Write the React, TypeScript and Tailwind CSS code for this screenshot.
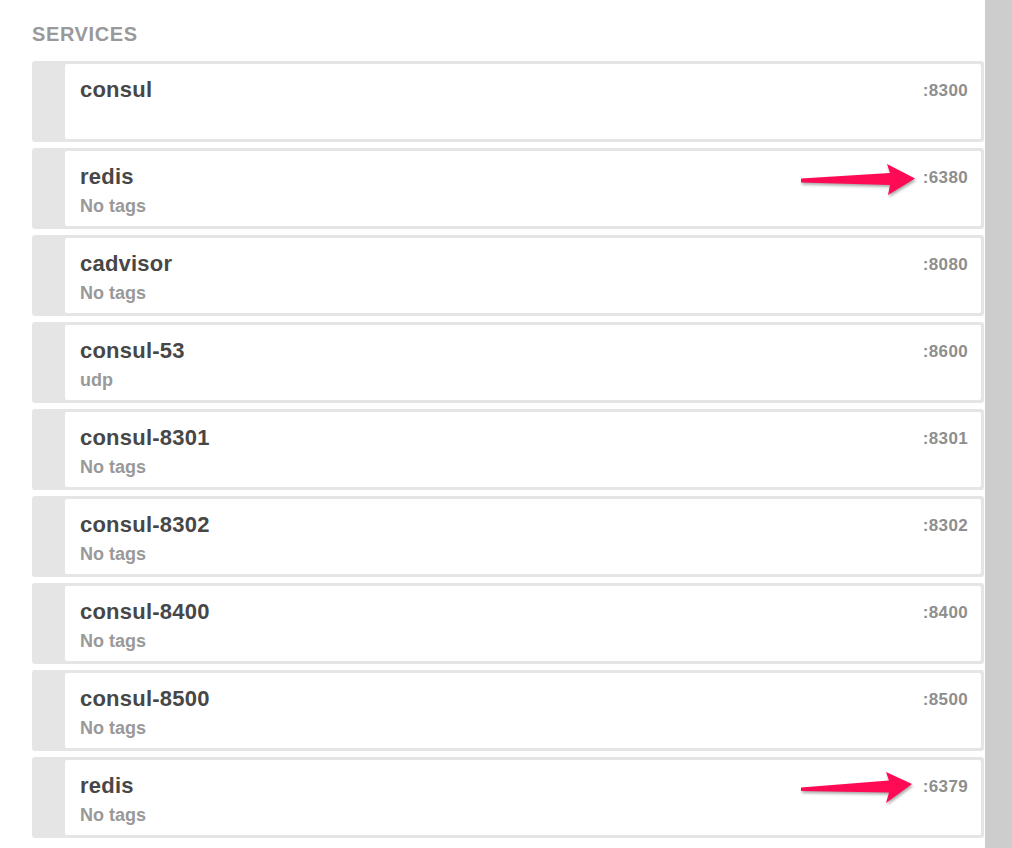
import React from 'react';

type Service = { name: string; tags: string; port: string; arrow?: 'a' | 'b' };

const services: Service[] = [
  { name: 'consul', tags: '', port: ':8300' },
  { name: 'redis', tags: 'No tags', port: ':6380', arrow: 'a' },
  { name: 'cadvisor', tags: 'No tags', port: ':8080' },
  { name: 'consul-53', tags: 'udp', port: ':8600' },
  { name: 'consul-8301', tags: 'No tags', port: ':8301' },
  { name: 'consul-8302', tags: 'No tags', port: ':8302' },
  { name: 'consul-8400', tags: 'No tags', port: ':8400' },
  { name: 'consul-8500', tags: 'No tags', port: ':8500' },
  { name: 'redis', tags: 'No tags', port: ':6379', arrow: 'b' },
];

function Arrow({ kind }: { kind: 'a' | 'b' }) {
  const d =
    kind === 'a'
      ? 'M1 16.5 L90 11 L87 2 L115 16.5 L88 33 L90 23 L1 20.5 Z'
      : 'M1 17.5 L89 10.5 L86 2 L112 14 L86 33 L89 22.5 L1 21 Z';
  return (
    <svg
      width="120"
      height="38"
      viewBox="0 0 120 38"
      className={kind === 'a' ? 'absolute left-[768px] top-[14px]' : 'absolute left-[768px] top-[13px]'}
      style={{ filter: 'drop-shadow(1px 2px 1.5px rgba(0,0,0,0.35))' }}
    >
      <path d={d} fill="#ff0a55" />
    </svg>
  );
}

function ServiceCard({ s }: { s: Service }) {
  return (
    <div className="relative flex h-[81px] rounded-[3px] bg-[#e5e5e5] pl-[33px] pr-[3px] py-[3px]">
      <div className="flex-1 rounded-[2px] bg-white pl-[15px] pr-[13px] pt-[12px]">
        <div className="flex items-start justify-between">
          <span className="text-[22px] leading-[27px] font-bold tracking-[0.01em] text-[#474747]">{s.name}</span>
          <span className="mt-[5px] text-[17px] leading-[20px] font-bold tracking-[0.02em] text-[#8e8e8e]">{s.port}</span>
        </div>
        {s.tags && (
          <div className="mt-[5px] text-[18px] leading-[22px] font-bold text-[#999999]">{s.tags}</div>
        )}
      </div>
      {s.arrow && <Arrow kind={s.arrow} />}
    </div>
  );
}

export default function App() {
  return (
    <div className="flex h-[848px] w-[1012px] overflow-hidden bg-white" style={{ fontFamily: '"Liberation Sans", Arial, sans-serif' }}>
      <div className="flex-1 pl-[32px] pr-[1px] pt-[22px]">
        <h2 className="text-[20px] leading-[24px] font-bold tracking-[0.03em] text-[#999999] uppercase">Services</h2>
        <div className="mt-[15px] flex flex-col gap-[6px]">
          {services.map((s, i) => (
            <ServiceCard key={i} s={s} />
          ))}
        </div>
      </div>
      <div className="w-[27px] bg-[#cdcdcd]" />
    </div>
  );
}
